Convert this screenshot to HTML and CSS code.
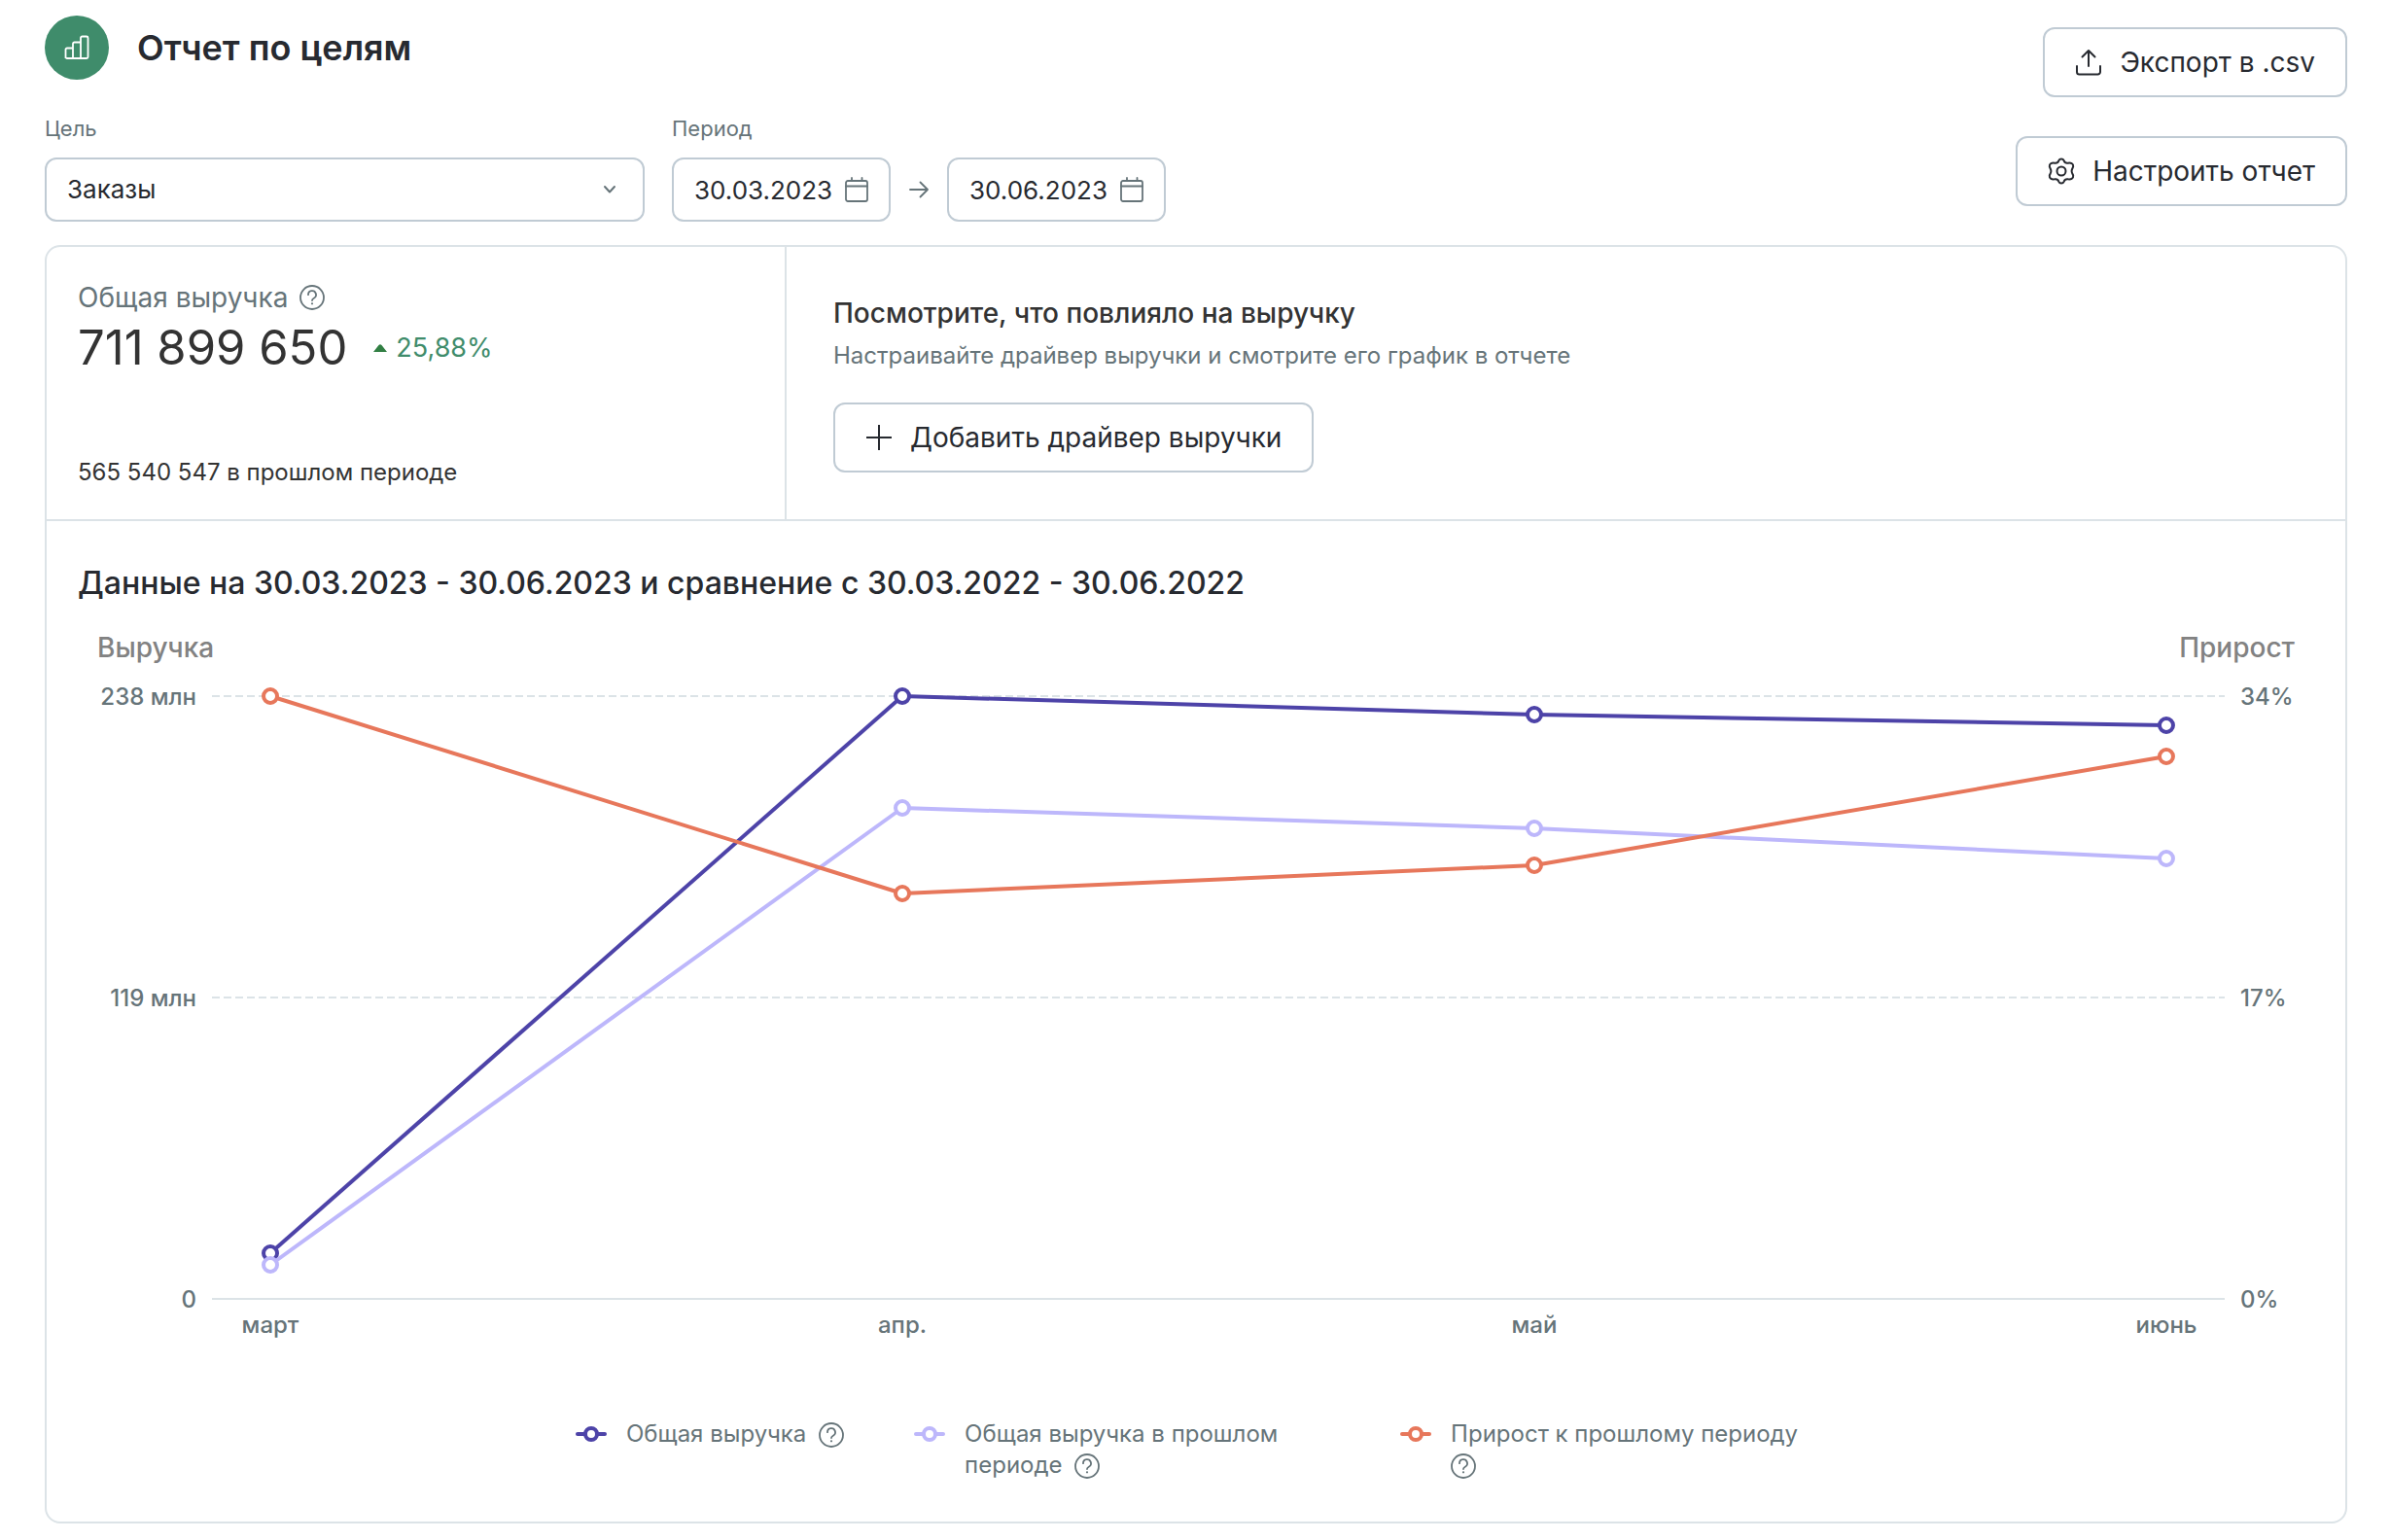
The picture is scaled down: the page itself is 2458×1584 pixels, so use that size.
FILE: index.html
```html
<!DOCTYPE html>
<html lang="ru">
<head>
<meta charset="utf-8">
<meta name="viewport" content="width=device-width, initial-scale=1">
<title>Отчет по целям</title>
<link rel="stylesheet" href="styles.css">
</head>
<body>
<svg class="sprite" aria-hidden="true">
  <symbol id="help" viewBox="0 0 26 26">
    <circle cx="13" cy="13" r="12" fill="none" stroke="currentColor" stroke-width="1.8"/>
    <path d="M9 10.2a4 4 0 1 1 5.8 3.500c-1.200.6-1.800 1.200-1.800 2.400" fill="none" stroke="currentColor" stroke-width="1.8" stroke-linecap="round"/>
    <circle cx="13" cy="19.3" r="1.1" fill="currentColor"/>
  </symbol>
  <symbol id="calendar" viewBox="0 0 24 26">
    <rect x="1" y="4" width="22" height="21" rx="2" fill="none" stroke="currentColor" stroke-width="1.8"/>
    <path d="M1 9.500h22M7 1v3M17.500 1v3" fill="none" stroke="currentColor" stroke-width="1.8" stroke-linecap="round"/>
  </symbol>
  <symbol id="marker" viewBox="0 0 32 16">
    <path d="M2 8h28" stroke="currentColor" stroke-width="4" stroke-linecap="round"/>
    <circle cx="16" cy="8" r="6" fill="#fff" stroke="currentColor" stroke-width="4"/>
  </symbol>
</svg>

<main class="page">
  <header class="top">
    <div class="top-main">
      <div class="heading">
        <span class="logo">
          <svg width="26" height="26" viewBox="0 0 26 26" fill="none" stroke="#fff" stroke-width="1.8" stroke-linejoin="round"><path d="M1.500 24V15a1.500 1.500 0 0 1 1.500-1.500h6V24M9 24V9a1.500 1.500 0 0 1 1.500-1.500H17M17 24V3a1.500 1.500 0 0 1 1.500-1.500H23A1.500 1.500 0 0 1 24.500 3V22.500A1.500 1.500 0 0 1 23 24H3a1.500 1.500 0 0 1-1.500-1.500"/></svg>
        </span>
        <h1>Отчет по целям</h1>
      </div>
      <form class="filters">
        <div class="field field-goal">
          <label for="goal">Цель</label>
          <div class="control">
            <select id="goal"><option>Заказы</option></select>
            <svg class="chevron" width="14" height="10" viewBox="0 0 14 10" fill="none" stroke="currentColor" stroke-width="2" stroke-linecap="round" stroke-linejoin="round"><path d="M2 2l5 5.500L12 2"/></svg>
          </div>
        </div>
        <div class="field">
          <label for="from">Период</label>
          <div class="range">
            <div class="control date"><input id="from" type="text" value="30.03.2023"><svg width="24" height="26"><use href="#calendar"/></svg></div>
            <svg class="arrow" width="20" height="18" viewBox="0 0 20 18" fill="none" stroke="currentColor" stroke-width="1.8" stroke-linecap="round" stroke-linejoin="round"><path d="M1 9h18M11.500 1.500L19 9l-7.500 7.500"/></svg>
            <div class="control date"><input type="text" value="30.06.2023" aria-label="Конец периода"><svg width="24" height="26"><use href="#calendar"/></svg></div>
          </div>
        </div>
      </form>
    </div>
    <div class="actions">
      <button class="btn" type="button">
        <svg width="28" height="28" viewBox="0 0 28 28" fill="none" stroke="currentColor" stroke-width="2" stroke-linecap="round" stroke-linejoin="round"><path d="M2 18v6a2.500 2.500 0 0 0 2.500 2.500h19A2.500 2.500 0 0 0 26 24v-6M14 18V2M7.500 8.500L14 2l6.500 6.500"/></svg>
        Экспорт в .csv
      </button>
      <button class="btn" type="button">
        <svg width="28" height="28" viewBox="0 0 28 28" fill="none" stroke="currentColor" stroke-width="2" stroke-linejoin="round"><circle cx="14" cy="14" r="4.500"/><path d="M11.400 3.200C12.300 1 15.700 1 16.600 3.200 17.300 5.200 18.900 6.100 21 5.700 23.500 5.300 26.600 6.200 26.200 9.300 25.900 10.800 24.600 11.900 24.600 14S25.900 17.200 26.200 18.700C26.600 21.800 23.500 22.700 21 22.300 18.900 21.900 17.300 22.800 16.600 24.800 15.700 27 12.300 27 11.400 24.800 10.700 22.800 9.100 21.900 7 22.300 4.500 22.700 1.400 21.800 1.800 18.700 2.100 17.200 3.400 16.100 3.400 14S2.100 10.800 1.800 9.300C1.400 6.200 4.500 5.300 7 5.700 9.100 6.100 10.700 5.200 11.400 3.200Z"/></svg>
        Настроить отчет
      </button>
    </div>
  </header>

  <section class="card">
    <div class="summary">
      <div class="metric">
        <div class="metric-name">Общая выручка <svg class="help" width="26" height="26"><use href="#help"/></svg></div>
        <div class="metric-row">
          <span class="metric-value">711 899 650</span>
          <span class="delta"><svg width="14" height="8" viewBox="0 0 14 8"><path d="M0 8L5.500 1Q7-.6 8.500 1L14 8Z" fill="#317f43"/></svg>25,88%</span>
        </div>
        <p class="metric-prev">565 540 547 в прошлом периоде</p>
      </div>
      <div class="driver">
        <h2>Посмотрите, что повлияло на выручку</h2>
        <p>Настраивайте драйвер выручки и смотрите его график в отчете</p>
        <button class="btn" type="button">
          <svg width="28" height="28" viewBox="0 0 28 28" fill="none" stroke="currentColor" stroke-width="2"><path d="M14 1v26M1 14h26"/></svg>
          Добавить драйвер выручки
        </button>
      </div>
    </div>

    <div class="report">
      <h2>Данные на 30.03.2023 - 30.06.2023 и сравнение с 30.03.2022 - 30.06.2022</h2>
      <div class="axis-titles"><span>Выручка</span><span>Прирост</span></div>
      <div class="chart">
        <div class="axis axis-left"><span>238 млн</span><span>119 млн</span><span>0</span></div>
        <svg class="plot" width="100%" height="622" role="img" aria-label="График выручки и прироста">
          <g stroke="#dce3e7" stroke-width="2">
            <line x1="0" y1="1" x2="100%" y2="1" stroke-dasharray="8 4"/>
            <line x1="0" y1="311" x2="100%" y2="311" stroke-dasharray="8 4"/>
            <line x1="0" y1="621" x2="100%" y2="621"/>
          </g>
          <g class="series total">
            <line x1="2.9%" y1="574" x2="34.3%" y2="1"/><line x1="34.3%" y1="1" x2="65.7%" y2="20"/><line x1="65.7%" y1="20" x2="97.1%" y2="31"/>
            <circle cx="2.9%" cy="574" r="7"/><circle cx="34.3%" cy="1" r="7"/><circle cx="65.7%" cy="20" r="7"/><circle cx="97.1%" cy="31" r="7"/>
          </g>
          <g class="series previous">
            <line x1="2.9%" y1="586" x2="34.3%" y2="116"/><line x1="34.3%" y1="116" x2="65.7%" y2="137"/><line x1="65.7%" y1="137" x2="97.1%" y2="168"/>
            <circle cx="2.9%" cy="586" r="7"/><circle cx="34.3%" cy="116" r="7"/><circle cx="65.7%" cy="137" r="7"/><circle cx="97.1%" cy="168" r="7"/>
          </g>
          <g class="series growth">
            <line x1="2.9%" y1="1" x2="34.3%" y2="204"/><line x1="34.3%" y1="204" x2="65.7%" y2="175"/><line x1="65.7%" y1="175" x2="97.1%" y2="63"/>
            <circle cx="2.9%" cy="1" r="7"/><circle cx="34.3%" cy="204" r="7"/><circle cx="65.7%" cy="175" r="7"/><circle cx="97.1%" cy="63" r="7"/>
          </g>
        </svg>
        <div class="axis axis-right"><span>34%</span><span>17%</span><span>0%</span></div>
        <div class="months"><span>март</span><span>апр.</span><span>май</span><span>июнь</span></div>
      </div>
      <ul class="legend">
        <li><svg class="total" width="32" height="16"><use href="#marker"/></svg><div><span>Общая выручка</span> <svg class="help" width="26" height="26"><use href="#help"/></svg></div></li>
        <li><svg class="previous" width="32" height="16"><use href="#marker"/></svg><div><span>Общая выручка в прошлом периоде</span> <svg class="help" width="26" height="26"><use href="#help"/></svg></div></li>
        <li><svg class="growth" width="32" height="16"><use href="#marker"/></svg><div><span>Прирост к прошлому периоду</span> <svg class="help" width="26" height="26"><use href="#help"/></svg></div></li>
      </ul>
    </div>
  </section>
</main>
</body>
</html>
```
FILE: styles.css
```css
* { box-sizing: border-box; }

body {
  margin: 0;
  background: #fff;
  color: #272a30;
  font: 400 24px/32px Inter, "Noto Sans", sans-serif;
  font-optical-sizing: none;
}

h1, h2, p, ul { margin: 0; padding: 0; font-weight: 500; }
p { font-weight: 400; }
svg { flex: none; }
.sprite { position: absolute; width: 0; height: 0; }

.page { padding: 16px 44px 16px 46px; }

.top { display: flex; justify-content: space-between; margin-bottom: 24px; }
.heading { display: flex; align-items: center; gap: 29px; }
.heading h1 { font-size: 36px; line-height: 44px; font-weight: 600; }
.logo {
  display: flex;
  align-items: center;
  justify-content: center;
  width: 66px;
  height: 66px;
  border-radius: 50%;
  background: #3f8c6b;
}

.filters { display: flex; gap: 28px; margin-top: 34px; }
.field { display: flex; flex-direction: column; gap: 13px; }
.field label { color: #667479; font-size: 22px; line-height: 33px; }
.field-goal { width: 617px; }
.control {
  display: flex;
  align-items: center;
  height: 66px;
  padding: 0 21px;
  border: 2px solid #c0cbd4;
  border-radius: 12px;
  color: #667479;
}
.control input, .control select {
  flex: 1;
  min-width: 0;
  height: 100%;
  padding: 0;
  border: 0;
  outline: 0;
  appearance: none;
  background: none;
  color: #272a30;
  font: inherit;
  font-size: 26px;
}
.chevron { margin-right: 6px; }
.range { display: flex; align-items: center; gap: 19px; color: #667479; }
.date { width: 225px; }

.actions { display: flex; flex-direction: column; align-items: flex-end; gap: 40px; padding-top: 12px; }
.btn {
  display: flex;
  align-items: center;
  gap: 18px;
  height: 72px;
  padding: 0 31px;
  border: 2px solid #c0cbd4;
  border-radius: 12px;
  background: #fff;
  color: #272a30;
  font: inherit;
  font-size: 28px;
}

.card { border: 2px solid #dce3e7; border-radius: 16px; }
.summary { display: flex; border-bottom: 2px solid #dce3e7; }
.metric {
  display: flex;
  flex-direction: column;
  width: 761px;
  padding: 32px;
  border-right: 2px solid #dce3e7;
}
.metric-name { display: flex; align-items: center; gap: 12px; color: #667479; font-size: 28px; line-height: 40px; }
.metric-row { display: flex; align-items: center; gap: 27px; }
.metric-value { color: #333; font-size: 49px; line-height: 64px; }
.delta { display: flex; align-items: center; gap: 9px; color: #3f8c6b; font-size: 27px; }
.metric-prev { margin-top: auto; color: #333; }
.driver {
  display: flex;
  flex-direction: column;
  align-items: flex-start;
  padding: 48px;
}
.driver h2 { color: #333; font-size: 28px; line-height: 40px; }
.driver p { margin: 8px 0 32px; color: #667479; }

.report { padding: 44px 32px 42px; }
.report h2 { font-size: 32px; line-height: 40px; }
.axis-titles {
  display: flex;
  justify-content: space-between;
  margin: 28px 20px 0;
  color: #828282;
  font-size: 28px;
  font-weight: 500;
  line-height: 36px;
}
.chart {
  display: grid;
  grid-template-columns: 122px 1fr 76px;
  margin-top: 31px;
  row-gap: 10px;
  column-gap: 16px;
  color: #667479;
  font-weight: 500;
}
.plot { display: block; overflow: visible; }
.axis { display: flex; flex-direction: column; justify-content: space-between; margin: -14px 0 -16px; }
.axis-left { text-align: right; }
.months { display: flex; justify-content: space-between; grid-column: 2; }
.months span { width: 120px; text-align: center; }

.series line { stroke: currentColor; stroke-width: 4; }
.series circle { fill: #fff; stroke: currentColor; stroke-width: 4; }
.total { color: #4d43a8; }
.previous { color: #bdb7fb; }
.growth { color: #e7775b; }

.legend {
  display: flex;
  justify-content: center;
  gap: 72px;
  margin-top: 80px;
  color: #667479;
  font-weight: 400;
  list-style: none;
}
.legend li { display: flex; gap: 20px; max-width: 428px; }
.legend li > svg { margin-top: 8px; }
.legend span { margin-right: 6px; }
.legend .help { vertical-align: -6px; }
```
